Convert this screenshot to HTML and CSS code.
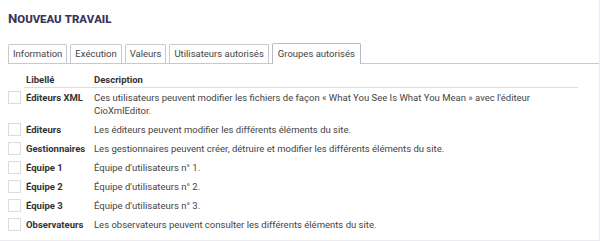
FILE: index.html
```html
<!DOCTYPE html>
<html lang="fr">
<head>
  <meta charset="UTF-8" />
  <title>Nouveau travail</title>
  <link rel="stylesheet" href="styles.css">
</head>
<body>
  <div class="panel">
    <h2 class="titre">Nouveau travail</h2>

    <div class="onglets">
      <span class="onglet">Information</span>
      <span class="onglet">Exécution</span>
      <span class="onglet">Valeurs</span>
      <span class="onglet">Utilisateurs autorisés</span>
      <span class="onglet actif">Groupes autorisés</span>
    </div>

    <table class="groupes">
      <colgroup><col class="c-case"><col class="c-nom"><col></colgroup>
      <thead>
        <tr><th></th><th>Libellé</th><th>Description</th></tr>
      </thead>
      <tbody>
        <tr><td><span class="case"></span></td><td class="nom">Éditeurs XML</td><td>Ces utilisateurs peuvent modifier les fichiers de façon « What You See Is What You Mean » avec l'éditeur CioXmlEditor.</td></tr>
        <tr><td><span class="case"></span></td><td class="nom">Éditeurs</td><td>Les éditeurs peuvent modifier les différents éléments du site.</td></tr>
        <tr><td><span class="case"></span></td><td class="nom">Gestionnaires</td><td>Les gestionnaires peuvent créer, détruire et modifier les différents éléments du site.</td></tr>
        <tr><td><span class="case"></span></td><td class="nom">Équipe 1</td><td>Équipe d'utilisateurs n° 1.</td></tr>
        <tr><td><span class="case"></span></td><td class="nom">Équipe 2</td><td>Équipe d'utilisateurs n° 2.</td></tr>
        <tr><td><span class="case"></span></td><td class="nom">Équipe 3</td><td>Équipe d'utilisateurs n° 3.</td></tr>
        <tr><td><span class="case"></span></td><td class="nom">Observateurs</td><td>Les observateurs peuvent consulter les différents éléments du site.</td></tr>
      </tbody>
    </table>
  </div>
</body>
</html>
```

FILE: styles.css
```css
body { margin: 0; background: #f4f4f6; font-family: Roboto, "Liberation Sans", sans-serif; color: #333; }
.panel { background: #fff; border-right: 1px solid #ececf0; border-bottom: 1px solid #ececf0; height: 241px; box-sizing: border-box; padding: 11px 0 0 8px; }
.titre { margin: 0 0 16px 0; font-size: 13.2px; line-height: 16px; font-variant: small-caps; font-weight: bold; color: #37365a; }
.onglets { display: flex; gap: 3px; border-bottom: 1px solid #c8c8d2; align-items: flex-end; height: 20px; }
.onglet { font-size: 9.5px; color: #444; border: 1px solid #c8c8d2; border-bottom: none; border-radius: 2px 2px 0 0; padding: 3px 4px 3px; line-height: 12px; background: #fff; }
.onglet.actif { padding: 4px 5px 4px; margin-bottom: -1px; border-color: #b8b8c6; }
.groupes { border-collapse: collapse; table-layout: fixed; font-size: 9.5px; margin-top: 8px; width: 570px; }
.c-case { width: 16px; }
.c-nom { width: 68px; }
.groupes th { text-align: left; font-weight: bold; color: #333; padding: 1px 4px 1px 2px; line-height: 13px; border-bottom: 1px solid #dcdce8; }
.groupes th:first-child { border-bottom: none; }
.groupes td { padding: 3px 4px 3px 2px; vertical-align: top; line-height: 13px; color: #444; }
.groupes td:first-child { padding-left: 0; }
.groupes td.nom { font-weight: bold; color: #333; white-space: nowrap; }
.case { display: block; width: 11px; height: 11px; border: 1px solid #dcdce0; }
```
